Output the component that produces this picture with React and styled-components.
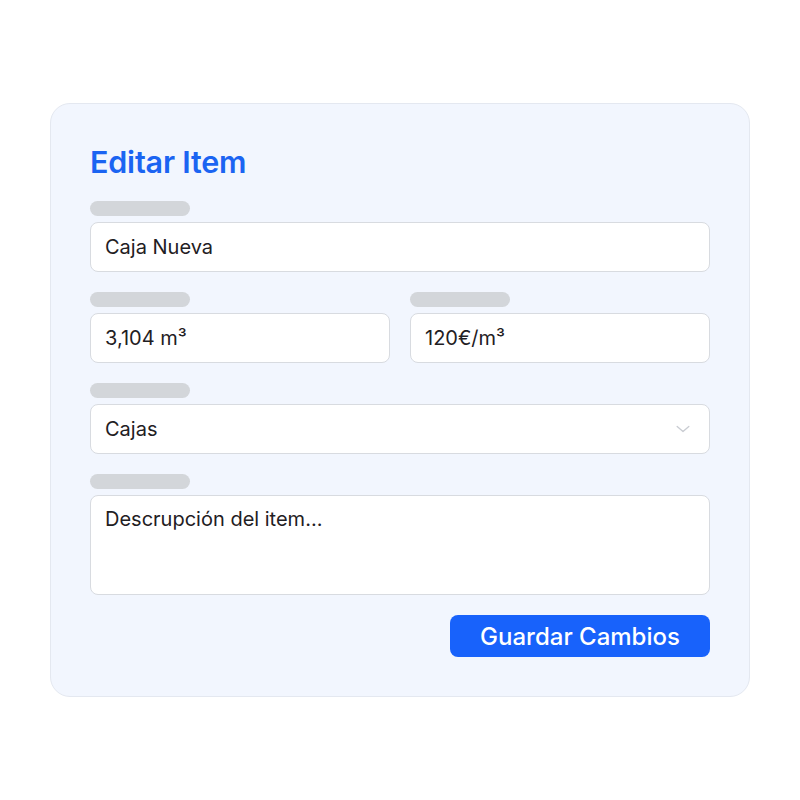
import React from "react";
import styled, { createGlobalStyle } from "styled-components";

const Global = createGlobalStyle`
  html, body { margin: 0; padding: 0; background: #ffffff; }
  body { font-family: Inter, "Noto Sans", sans-serif; }
  * { box-sizing: border-box; }
`;

const Page = styled.div`
  width: 800px;
  height: 800px;
  display: flex;
  align-items: center;
  justify-content: center;
`;

const Card = styled.div`
  width: 700px;
  background: #f2f6fe;
  border: 1px solid #e4e8f0;
  border-radius: 20px;
  padding: 39px 39px 39px;
  display: flex;
  flex-direction: column;
`;

const Title = styled.h1`
  margin: 0 0 20px;
  font-size: 30.5px;
  line-height: 38px;
  font-weight: 600;
  color: #1b64f2;
  letter-spacing: -0.2px;
`;

const Fields = styled.div`
  display: flex;
  flex-direction: column;
  gap: 20px;
`;

const Row = styled.div`
  display: grid;
  grid-template-columns: 1fr 1fr;
  gap: 20px;
`;

const Field = styled.div`
  display: flex;
  flex-direction: column;
  gap: 6px;
`;

const LabelBar = styled.div`
  width: 100px;
  height: 15px;
  border-radius: 8px;
  background: #d3d6da;
`;

const Box = styled.div`
  height: ${(p) => p.$h || 50}px;
  background: #ffffff;
  border: 1px solid #d8dbe0;
  border-radius: 8px;
  padding: ${(p) => (p.$multi ? "11px 14px" : "0 14px")};
  display: flex;
  align-items: ${(p) => (p.$multi ? "flex-start" : "center")};
  justify-content: space-between;
  font-size: 20px;
  color: #1f2023;
`;

const Chevron = styled.svg`
  width: 20px;
  height: 20px;
  margin-right: 2px;
`;

const Actions = styled.div`
  display: flex;
  justify-content: flex-end;
  margin-top: 20px;
`;

const Button = styled.button`
  width: 260px;
  height: 42px;
  border: none;
  border-radius: 8px;
  background: #1862fb;
  color: #ffffff;
  font-family: Inter, "Noto Sans", sans-serif;
  font-size: 24px;
  font-weight: 500;
  cursor: pointer;
`;

export default function App() {
  return (
    <>
      <Global />
      <Page>
        <Card>
          <Title>Editar Item</Title>
          <Fields>
            <Field>
              <LabelBar />
              <Box>Caja Nueva</Box>
            </Field>
            <Row>
              <Field>
                <LabelBar />
                <Box>3,104 m³</Box>
              </Field>
              <Field>
                <LabelBar />
                <Box>120€/m³</Box>
              </Field>
            </Row>
            <Field>
              <LabelBar />
              <Box>
                Cajas
                <Chevron viewBox="0 0 24 24" fill="none" stroke="#c9ccd2" strokeWidth="1.6" strokeLinecap="round" strokeLinejoin="round">
                  <path d="M5 9l7 6 7-6" />
                </Chevron>
              </Box>
            </Field>
            <Field>
              <LabelBar />
              <Box $multi $h={100}>Descrupción del item...</Box>
            </Field>
          </Fields>
          <Actions>
            <Button>Guardar Cambios</Button>
          </Actions>
        </Card>
      </Page>
    </>
  );
}
